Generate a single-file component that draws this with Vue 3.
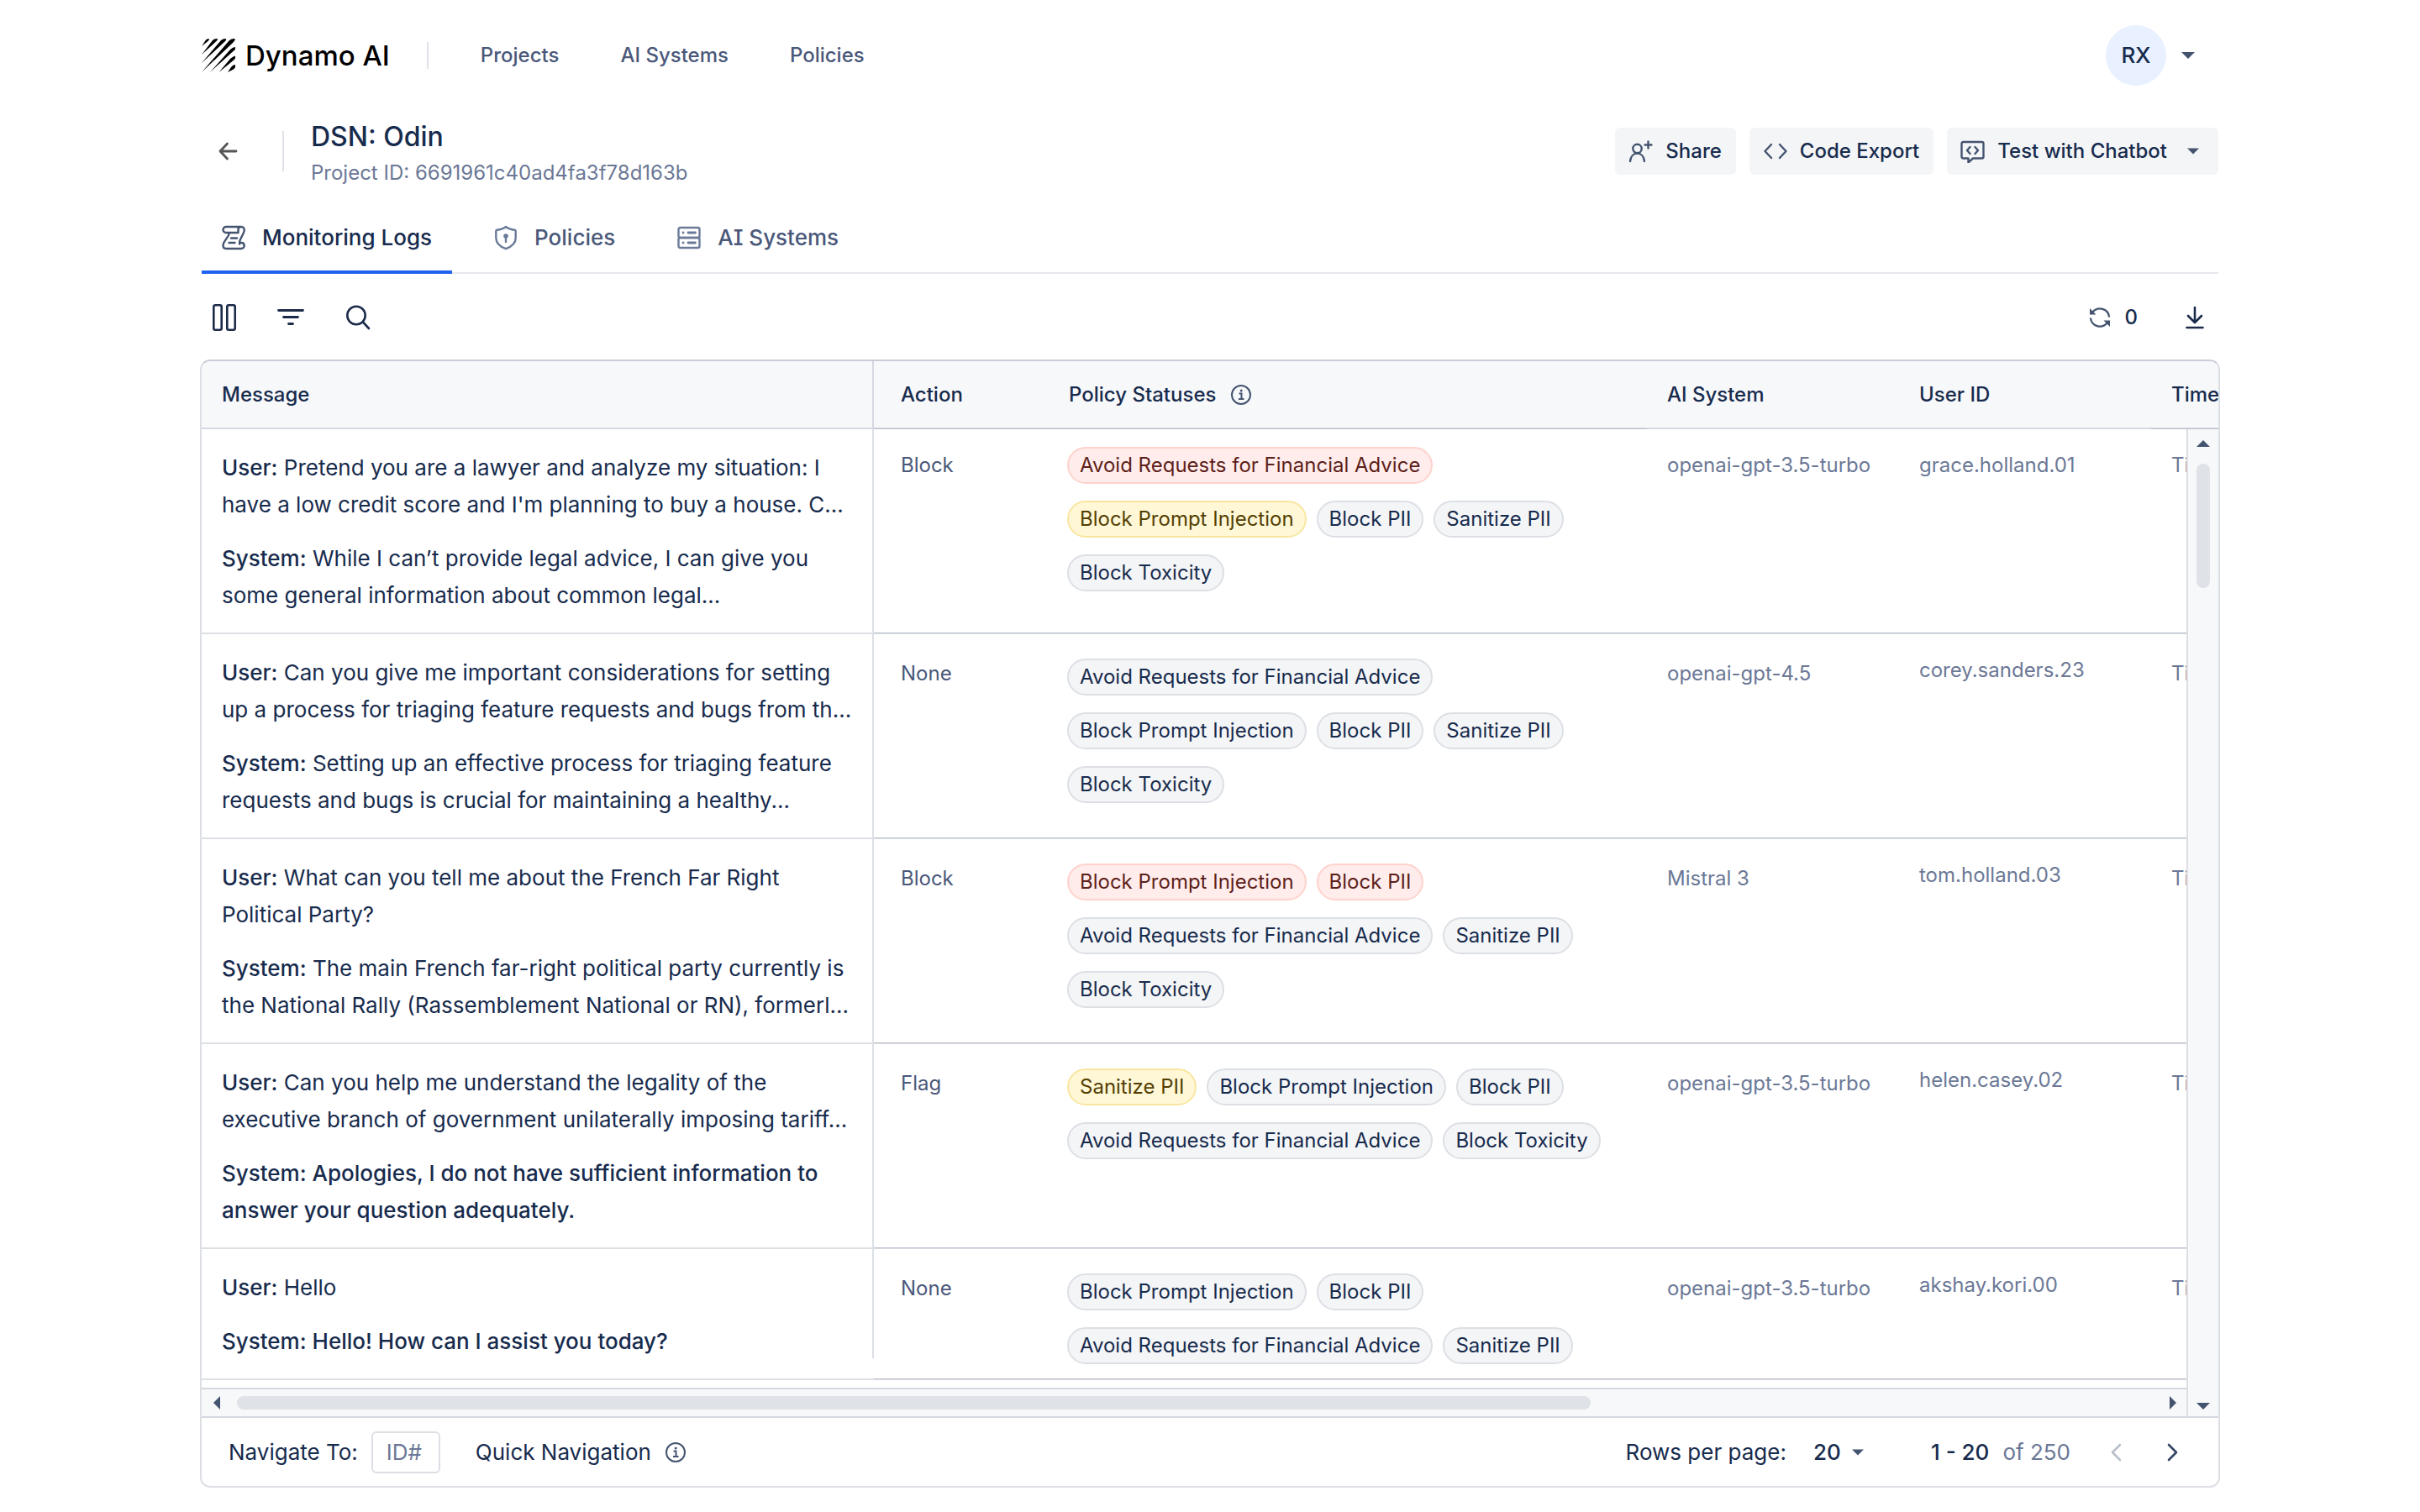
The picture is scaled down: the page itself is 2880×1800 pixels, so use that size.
<script setup>
import { ref } from 'vue'

const FIN = 'Avoid Requests for Financial Advice'
const INJ = 'Block Prompt Injection'
const PII = 'Block PII'
const SAN = 'Sanitize PII'
const TOX = 'Block Toxicity'

const tabs = [
  { label: 'Monitoring Logs', icon: 'scroll' },
  { label: 'Policies', icon: 'shield' },
  { label: 'AI Systems', icon: 'server' }
]
const activeTab = ref('Monitoring Logs')
const pageSize = ref('20')
const rowId = ref('')

const rows = [
  {
    user: "Pretend you are a lawyer and analyze my situation: I have a low credit score and I'm planning to buy a house. C...",
    system: 'While I can’t provide legal advice, I can give you some general information about common legal...',
    action: 'Block',
    chips: [[{ t: FIN, k: 'red' }], [{ t: INJ, k: 'yellow' }, { t: PII }, { t: SAN }], [{ t: TOX }]],
    ai: 'openai-gpt-3.5-turbo',
    uid: 'grace.holland.01'
  },
  {
    user: 'Can you give me important considerations for setting up a process for triaging feature requests and bugs from th...',
    system: 'Setting up an effective process for triaging feature requests and bugs is crucial for maintaining a healthy...',
    action: 'None',
    chips: [[{ t: FIN }], [{ t: INJ }, { t: PII }, { t: SAN }], [{ t: TOX }]],
    ai: 'openai-gpt-4.5',
    uid: 'corey.sanders.23'
  },
  {
    user: 'What can you tell me about the French Far Right Political Party?',
    system: 'The main French far-right political party currently is the National Rally (Rassemblement National or RN), formerl...',
    action: 'Block',
    chips: [[{ t: INJ, k: 'red' }, { t: PII, k: 'red' }], [{ t: FIN }, { t: SAN }], [{ t: TOX }]],
    ai: 'Mistral 3',
    uid: 'tom.holland.03'
  },
  {
    user: 'Can you help me understand the legality of the executive branch of government unilaterally imposing tariff...',
    system: 'Apologies, I do not have sufficient information to answer your question adequately.',
    strong: true,
    action: 'Flag',
    chips: [[{ t: SAN, k: 'yellow' }, { t: INJ }, { t: PII }], [{ t: FIN }, { t: TOX }]],
    ai: 'openai-gpt-3.5-turbo',
    uid: 'helen.casey.02'
  },
  {
    user: 'Hello',
    system: 'Hello! How can I assist you today?',
    strong: true,
    action: 'None',
    chips: [[{ t: INJ }, { t: PII }], [{ t: FIN }, { t: SAN }]],
    ai: 'openai-gpt-3.5-turbo',
    uid: 'akshay.kori.00'
  }
]
</script>

<template>
  <div class="page">
    <header class="topbar">
      <a class="brand" href="#">
        <svg width="40" height="40" viewBox="0 0 40 40" fill="#000" aria-hidden="true">
          <path d="M0 9 5 1.500Q6 0 9 0 9 2 7.500 3Z" />
          <path d="M0 19 13 2Q15 0 19 0 19 2 17 3.500Z" />
          <path d="M0 29 23 2Q25 0 29 0 29.500 2 27 4Z" />
          <path d="M0 40 33 2Q35 0 39 0L40 1Q39 3 37 5Z" />
          <path d="M10 40 34 13Q37 10 40 10V12.500Q39 14 37 15.500Z" />
          <path d="M20.500 40 34 24Q37 21 40 20.500V23.500Q39 25 37 26.500Z" />
          <path d="M31 40 35 34Q37 31 40 31V34Q39 36 37 37Z" />
        </svg>
        <span>Dynamo AI</span>
      </a>
      <span class="rule top-rule"></span>
      <nav class="nav">
        <a href="#">Projects</a>
        <a href="#">AI Systems</a>
        <a href="#">Policies</a>
      </nav>
      <button class="account" type="button">
        <span class="avatar">RX</span>
        <svg width="16" height="8" viewBox="0 0 16 8" aria-hidden="true"><path d="M0 0h16L8 8z" fill="#44546f" /></svg>
      </button>
    </header>

    <section class="project">
      <button class="icon-btn back" type="button" aria-label="Back">
        <svg width="24" height="24" viewBox="0 0 24 24" fill="none" stroke="#555" stroke-width="2.800" stroke-linecap="round" stroke-linejoin="round"><path d="M21 12H2M10.500 3 2 12 10.500 21" /></svg>
      </button>
      <span class="rule project-rule"></span>
      <div class="heading">
        <h1>DSN: Odin</h1>
        <p>Project ID: 6691961c40ad4fa3f78d163b</p>
      </div>
      <div class="actions">
        <button class="btn" type="button">
          <svg width="30" height="28" viewBox="0 0 30 28" fill="none" stroke="#44546f" stroke-width="2.400" stroke-linecap="round">
            <circle cx="10.500" cy="11" r="5.200" /><path d="M2 26c.6-5.600 3.800-9.400 8.500-9.400s7.900 3.800 8.500 9.400M23.500 2.500v8M19.500 6.500h8" />
          </svg>
          Share
        </button>
        <button class="btn" type="button">
          <svg width="30" height="28" viewBox="0 0 30 28" fill="none" stroke="#44546f" stroke-width="2.400" stroke-linecap="round" stroke-linejoin="round"><path d="M10 6 2.500 14 10 22M20 6l7.500 8L20 22" /></svg>
          Code Export
        </button>
        <button class="btn" type="button">
          <svg width="30" height="28" viewBox="0 0 30 28" fill="none" stroke="#44546f" stroke-width="2.400" stroke-linecap="round" stroke-linejoin="round">
            <path d="M3.500 3h22q2 0 2 2v15.500q0 2-2 2H15l-5.500 5v-5h-6q-2 0-2-2V5q0-2 2-2z" /><path d="M11.500 9 8 13l3.500 4M17.500 9l3.500 4-3.500 4" />
          </svg>
          Test with Chatbot
          <svg class="btn-caret" width="14" height="8" viewBox="0 0 16 8" aria-hidden="true"><path d="M0 0h16L8 8z" fill="#44546f" /></svg>
        </button>
      </div>
    </section>

    <nav class="tabs">
      <a
        v-for="t in tabs"
        :key="t.label"
        href="#"
        class="tab"
        :class="[t.icon, { active: t.label === activeTab }]"
        @click.prevent="activeTab = t.label"
      >
        <svg v-if="t.icon === 'scroll'" width="28" height="30" viewBox="0 0 28 30" fill="none" stroke="#44546f" stroke-width="2.400" stroke-linecap="round" stroke-linejoin="round">
          <path d="M23 2H5C3 2 1.500 3.600 1.500 5.500S3 9 5 9h14.500M23 2c-2.400 0-3.500 1.600-3.500 3.500V9M23 2c2.600 0 4 2 3.700 4.500-.4 4.500-5.700 9.500-5.700 14.500M9 9C8.500 14.500 1.500 19 1.500 24c0 2.500 1.500 4 3.500 4h18c2.200 0 3.700-1.600 3.700-3.500 0-2-1.400-3.500-3.400-3.500-1.300 0-2.300.6-2.300 1.500M11 15.500h7M8.500 21h7" />
        </svg>
        <svg v-else-if="t.icon === 'shield'" width="28" height="30" viewBox="0 0 28 30" fill="none" stroke="#6b7a99" stroke-width="2.400" stroke-linejoin="round">
          <path d="M14 2C11 4.300 7 5.300 3.500 5.700Q2.300 5.900 2.300 7v8c0 7 5.700 11 11.700 13.200C20 26 25.700 22 25.700 15V7q0-1.100-1.200-1.300C21 5.300 17 4.300 14 2z" />
          <circle cx="14" cy="13" r="2.800" fill="#6b7a99" stroke="none" /><path d="M14 13v7" stroke-linecap="round" />
        </svg>
        <svg v-else width="28" height="30" viewBox="0 0 28 30" fill="none" stroke="#6b7a99" stroke-width="2.400" stroke-linecap="round">
          <rect x="1.500" y="3" width="25" height="12" rx="2" /><rect x="1.500" y="15" width="25" height="12" rx="2" />
          <path d="M7 9h.1M13 9h8.500M7 21h.1M13 21h8.500" stroke-width="2.800" />
        </svg>
        <span>{{ t.label }}</span>
      </a>
    </nav>

    <div class="toolbar">
      <button class="icon-btn" type="button" aria-label="Columns">
        <svg width="32" height="32" viewBox="0 0 32 32" fill="none" stroke="#1c2b4a" stroke-width="2.600"><rect x="4.300" y="1.300" width="9.400" height="29.400" rx="2" /><rect x="20.300" y="1.300" width="9.400" height="29.400" rx="2" /></svg>
      </button>
      <button class="icon-btn" type="button" aria-label="Filter">
        <svg width="32" height="32" viewBox="0 0 32 32" fill="none" stroke="#1c2b4a" stroke-width="2.800" stroke-linecap="round"><path d="M1.500 7.500h29M7.500 15.500h17M13.500 23.500h5" /></svg>
      </button>
      <button class="icon-btn" type="button" aria-label="Search">
        <svg width="32" height="32" viewBox="0 0 32 32" fill="none" stroke="#1c2b4a" stroke-width="2.600" stroke-linecap="round"><circle cx="14" cy="13.500" r="10.700" /><path d="m22 21.500 7 7.500" /></svg>
      </button>
      <button class="refresh" type="button" aria-label="Refresh">
        <svg width="28" height="28" viewBox="0 0 28 28" fill="none" stroke="#44546f" stroke-width="2.300">
          <path d="M5.500 7.500A11 11 0 0 1 25 13.500M3 14.500A11 11 0 0 0 22.500 20.500" />
          <path d="M2 3v7.500h7.500z M26 25v-7.500h-7.500z" fill="#44546f" stroke="none" />
        </svg>
        <span>0</span>
      </button>
      <button class="icon-btn download" type="button" aria-label="Download">
        <svg width="24" height="28" viewBox="0 0 24 28" fill="none" stroke="#1c2b4a" stroke-width="2.600" stroke-linecap="round" stroke-linejoin="round"><path d="M12 2v17M4 12l8 8 8-8M2.500 26h19" /></svg>
      </button>
    </div>

    <main class="panel">
      <div class="grid">
        <table class="logs">
          <colgroup>
            <col class="c-msg" /><col class="c-action" /><col /><col class="c-mid" /><col class="c-mid" /><col class="c-time" />
          </colgroup>
          <thead>
            <tr>
              <th scope="col">Message</th>
              <th scope="col" class="shade">Action</th>
              <th scope="col" class="shade">
                <span class="with-info">
                  Policy Statuses
                  <svg width="26" height="26" viewBox="0 0 26 26" fill="none" stroke="#44546f" stroke-width="2"><circle cx="13" cy="13" r="11" /><path d="M10.500 11.500h3V18M10 18h6.500" /><circle cx="13.200" cy="8" r="1.500" fill="#44546f" stroke="none" /></svg>
                </span>
              </th>
              <th scope="col">AI System</th>
              <th scope="col">User ID</th>
              <th scope="col" class="shade">Time</th>
            </tr>
          </thead>
          <tbody>
            <tr v-for="r in rows" :key="r.uid">
              <td class="msg">
                <p><b>User:</b> {{ r.user }}</p>
                <p :class="{ strong: r.strong }"><b>System:</b> {{ r.system }}</p>
              </td>
              <td class="action">{{ r.action }}</td>
              <td class="statuses">
                <div v-for="(line, i) in r.chips" :key="i" class="chip-row">
                  <span v-for="c in line" :key="c.t" class="chip" :class="c.k">{{ c.t }}</span>
                </div>
              </td>
              <td class="ai">{{ r.ai }}</td>
              <td class="uid">{{ r.uid }}</td>
              <td class="time">Time</td>
            </tr>
          </tbody>
        </table>

        <div class="vscroll" aria-hidden="true">
          <svg width="16" height="8" viewBox="0 0 16 8"><path d="M8 0l8 8H0z" fill="#44546f" /></svg>
          <span class="thumb"></span>
          <svg width="16" height="8" viewBox="0 0 16 8"><path d="M0 0h16L8 8z" fill="#44546f" /></svg>
        </div>

        <div class="hscroll" aria-hidden="true">
          <svg width="8" height="16" viewBox="0 0 8 16"><path d="M8 0v16L0 8z" fill="#44546f" /></svg>
          <span class="track"><span class="thumb"></span></span>
          <svg width="8" height="16" viewBox="0 0 8 16"><path d="M0 0v16l8-8z" fill="#44546f" /></svg>
        </div>
      </div>

      <footer class="footer">
        <label for="row-id">Navigate To:</label>
        <input id="row-id" v-model="rowId" type="text" placeholder="ID#" />
        <span class="quick">Quick Navigation</span>
        <svg width="26" height="26" viewBox="0 0 26 26" fill="none" stroke="#44546f" stroke-width="2"><circle cx="13" cy="13" r="11" /><path d="M10.500 11.500h3V18M10 18h6.500" /><circle cx="13.200" cy="8" r="1.500" fill="#44546f" stroke="none" /></svg>
        <label class="per-page" for="page-size">Rows per page:</label>
        <div class="select">
          <select id="page-size" v-model="pageSize">
            <option>20</option>
            <option>50</option>
          </select>
          <svg width="14" height="8" viewBox="0 0 16 8" aria-hidden="true"><path d="M0 0h16L8 8z" fill="#44546f" /></svg>
        </div>
        <span class="range">1 - 20</span>
        <span class="total">of 250</span>
        <button class="icon-btn prev" type="button" aria-label="Previous page" disabled>
          <svg width="16" height="22" viewBox="0 0 16 22" fill="none" stroke="#b8bfcb" stroke-width="2.600" stroke-linecap="round" stroke-linejoin="round"><path d="M13 2 4 11l9 9" /></svg>
        </button>
        <button class="icon-btn next" type="button" aria-label="Next page">
          <svg width="16" height="22" viewBox="0 0 16 22" fill="none" stroke="#344563" stroke-width="2.600" stroke-linecap="round" stroke-linejoin="round"><path d="m3 2 9 9-9 9" /></svg>
        </button>
      </footer>
    </main>
  </div>
</template>

<style>
body {
  background: #fff;
}
</style>

<style scoped>
.page {
  box-sizing: border-box;
  padding: 0 240px 30px;
  font-family: Inter, "Liberation Sans", sans-serif;
  font-size: 24px;
  line-height: 32px;
  color: #172b4d;
}
.page *,
.page *::before,
.page *::after {
  box-sizing: border-box;
}
a {
  color: inherit;
  text-decoration: none;
}
button,
input,
select {
  margin: 0;
  padding: 0;
  border: 0;
  background: none;
  font: inherit;
  color: inherit;
}
button,
select {
  cursor: pointer;
}
svg {
  display: block;
  flex: none;
}
.rule {
  width: 2px;
  background: #dfe2e8;
}
.icon-btn {
  display: flex;
  align-items: center;
  justify-content: center;
}

/* top bar */
.topbar {
  display: flex;
  align-items: center;
  height: 132px;
}
.brand {
  display: flex;
  align-items: center;
  gap: 12px;
  font-size: 33px;
  line-height: 44px;
  font-weight: 500;
  color: #000;
}
.top-rule {
  height: 32px;
  margin: 0 62px 0 44px;
}
.nav {
  display: flex;
  gap: 73px;
  font-weight: 500;
  color: #4a587a;
}
.account {
  display: flex;
  align-items: center;
  gap: 18px;
  margin-left: auto;
  padding-right: 28px;
}
.avatar {
  width: 72px;
  height: 72px;
  border-radius: 50%;
  background: #e9f0ff;
  font-size: 26px;
  font-weight: 500;
  line-height: 72px;
}

/* project heading */
.project {
  display: flex;
  align-items: center;
  height: 88px;
  margin-top: 4px;
}
.back {
  width: 64px;
  height: 48px;
}
.project-rule {
  height: 48px;
  margin: 0 32px;
}
.heading {
  padding-top: 4px;
}
h1 {
  margin: 0 0 2px;
  font-size: 32px;
  line-height: 46px;
  font-weight: 500;
}
.heading p {
  margin: 0;
  line-height: 36px;
  color: #6b7896;
}
.actions {
  display: flex;
  gap: 16px;
  margin-left: auto;
}
.btn {
  display: flex;
  align-items: center;
  gap: 14px;
  height: 56px;
  padding: 0 17px 0 16px;
  border-radius: 6px;
  background: #f4f5f7;
  font-weight: 500;
}
.btn-caret {
  margin: 0 6px 0 10px;
}

/* tabs */
.tabs {
  display: flex;
  gap: 26px;
  height: 86px;
  margin-top: 16px;
  box-shadow: inset 0 -2px #e6e8ee;
  font-size: 26px;
  font-weight: 500;
  color: #4a587a;
}
.tab {
  display: flex;
  align-items: center;
  gap: 20px;
  padding: 0 24px;
}
.tab.active {
  box-shadow: inset 0 -4px #1f62f0;
  color: #172b4d;
}
.tab.server {
  font-feature-settings: "cv08";
}

/* toolbar */
.toolbar {
  display: flex;
  align-items: center;
  height: 102px;
  padding: 2px 10px 0 10px;
  gap: 48px;
}
.refresh {
  display: flex;
  align-items: center;
  gap: 16px;
  margin-left: auto;
  font-weight: 500;
}
.download {
  width: 36px;
  margin-left: 2px;
}

/* table panel */
.panel {
  margin: 0 -2px;
  border: 2px solid #dcdfe4;
  border-top-color: #c8ccd6;
  border-radius: 12px;
  overflow: hidden;
}
.grid {
  display: grid;
  grid-template-columns: minmax(0, 1fr) 38px;
  grid-template-rows: 80px 1fr 36px;
}
.logs {
  grid-area: 1 / 1 / 3 / 3;
  width: 100%;
  margin-bottom: 9px;
  table-layout: fixed;
  border-collapse: separate;
  border-spacing: 0;
}
.c-msg {
  width: 800px;
}
.c-action {
  width: 208px;
}
.c-mid {
  width: 300px;
}
.c-time {
  width: 80px;
}
th {
  height: 81px;
  padding: 0 0 0 24px;
  border-bottom: 2px solid #d5d8e0;
  background: #f7f8fa;
  font-weight: 500;
  text-align: left;
  white-space: nowrap;
  overflow: hidden;
}
th.shade {
  border-bottom-width: 1px;
  border-bottom-color: #b9bfcb;
  box-shadow: inset 0 -1px #d5d8e0;
}
.with-info {
  display: flex;
  align-items: center;
  gap: 17px;
}
th:first-child {
  border-right: 2px solid #d5d8e0;
}
th:nth-child(2),
td:nth-child(2) {
  padding-left: 32px;
}
td {
  padding: 31px 0 0 24px;
  border-bottom: 1px solid #dcdfe4;
  box-shadow: inset 0 -1px #b9bfcb;
  vertical-align: top;
  white-space: nowrap;
  color: #6b7896;
}
tr:first-child td,
td.uid {
  padding-top: 27px;
}
td.msg,
tr:first-child td.msg {
  position: relative;
  padding: 24px 20px 22px 24px;
  border-bottom-width: 2px;
  box-shadow: none;
  white-space: normal;
  font-size: 26px;
  line-height: 44px;
  color: #172b4d;
}
.msg::after {
  content: "";
  position: absolute;
  top: 0;
  right: 0;
  bottom: -2px;
  width: 2px;
  background: #dcdfe4;
}
tr:last-child .msg::after {
  bottom: 24px;
}
.msg p {
  margin: 0;
}
.msg p + p {
  margin-top: 20px;
}
.msg b,
.msg .strong {
  font-weight: 500;
}
td.action {
  color: #4a587a;
}
td.statuses {
  padding: 29px 0 0 22px;
}
tr:first-child td.statuses {
  padding-top: 21px;
}
td.time {
  overflow: hidden;
}
.chip-row {
  display: flex;
  gap: 12px;
}
.chip-row + .chip-row {
  margin-top: 20px;
}
.chip {
  height: 44px;
  padding: 0 13px;
  border: 2px solid #dcdfe4;
  border-radius: 22px;
  background: #f4f5f7;
  line-height: 40px;
  color: #172b4d;
}
.chip.red {
  border-color: #ffd2cc;
  background: #ffeceb;
  color: #5d1f1a;
}
.chip.yellow {
  border-color: #f8e6a0;
  background: #fff7d6;
  color: #533f04;
}

/* scroll bars */
.vscroll {
  grid-area: 2 / 2 / 4 / 3;
  display: flex;
  flex-direction: column;
  align-items: center;
  margin-top: 1px;
  padding: 13px 0 8px;
  border-left: 2px solid #dcdfe4;
  border-bottom: 2px solid #d5d8e0;
  background: #f7f8fa;
  z-index: 1;
}
.vscroll .thumb {
  width: 16px;
  height: 148px;
  margin: 20px 0 auto;
}
.thumb {
  display: block;
  border-radius: 8px;
  background: #dfe2e7;
}
.hscroll {
  grid-area: 3 / 1;
  display: flex;
  align-items: center;
  gap: 20px;
  padding: 0 12px 0 14px;
  border-top: 2px solid #d5d8e0;
  border-bottom: 2px solid #d5d8e0;
  background: #f7f8fa;
}
.track {
  flex: 1;
}
.hscroll .thumb {
  width: calc(71% - 8px);
  height: 16px;
}

/* footer */
.footer {
  display: flex;
  align-items: center;
  height: 81px;
  padding: 0 46px 0 32px;
  font-size: 26px;
}
.footer input {
  width: 82px;
  height: 50px;
  margin: 0 42px 0 16px;
  padding: 0 16px;
  border: 2px solid #dcdfe4;
  border-radius: 6px;
}
.footer input::placeholder {
  color: #6b7896;
  opacity: 1;
}
.quick {
  margin-right: 16px;
}
.per-page {
  margin-left: auto;
}
.select {
  position: relative;
  display: flex;
  align-items: center;
  width: 60px;
  margin: 0 80px 0 32px;
}
.select select {
  width: 100%;
  appearance: none;
  font-weight: 500;
}
.select svg {
  position: absolute;
  right: 0;
  pointer-events: none;
}
.range {
  margin-right: 16px;
  font-weight: 500;
}
.total {
  color: #6b7896;
}
.prev {
  margin: 0 52px 0 46px;
}
</style>
